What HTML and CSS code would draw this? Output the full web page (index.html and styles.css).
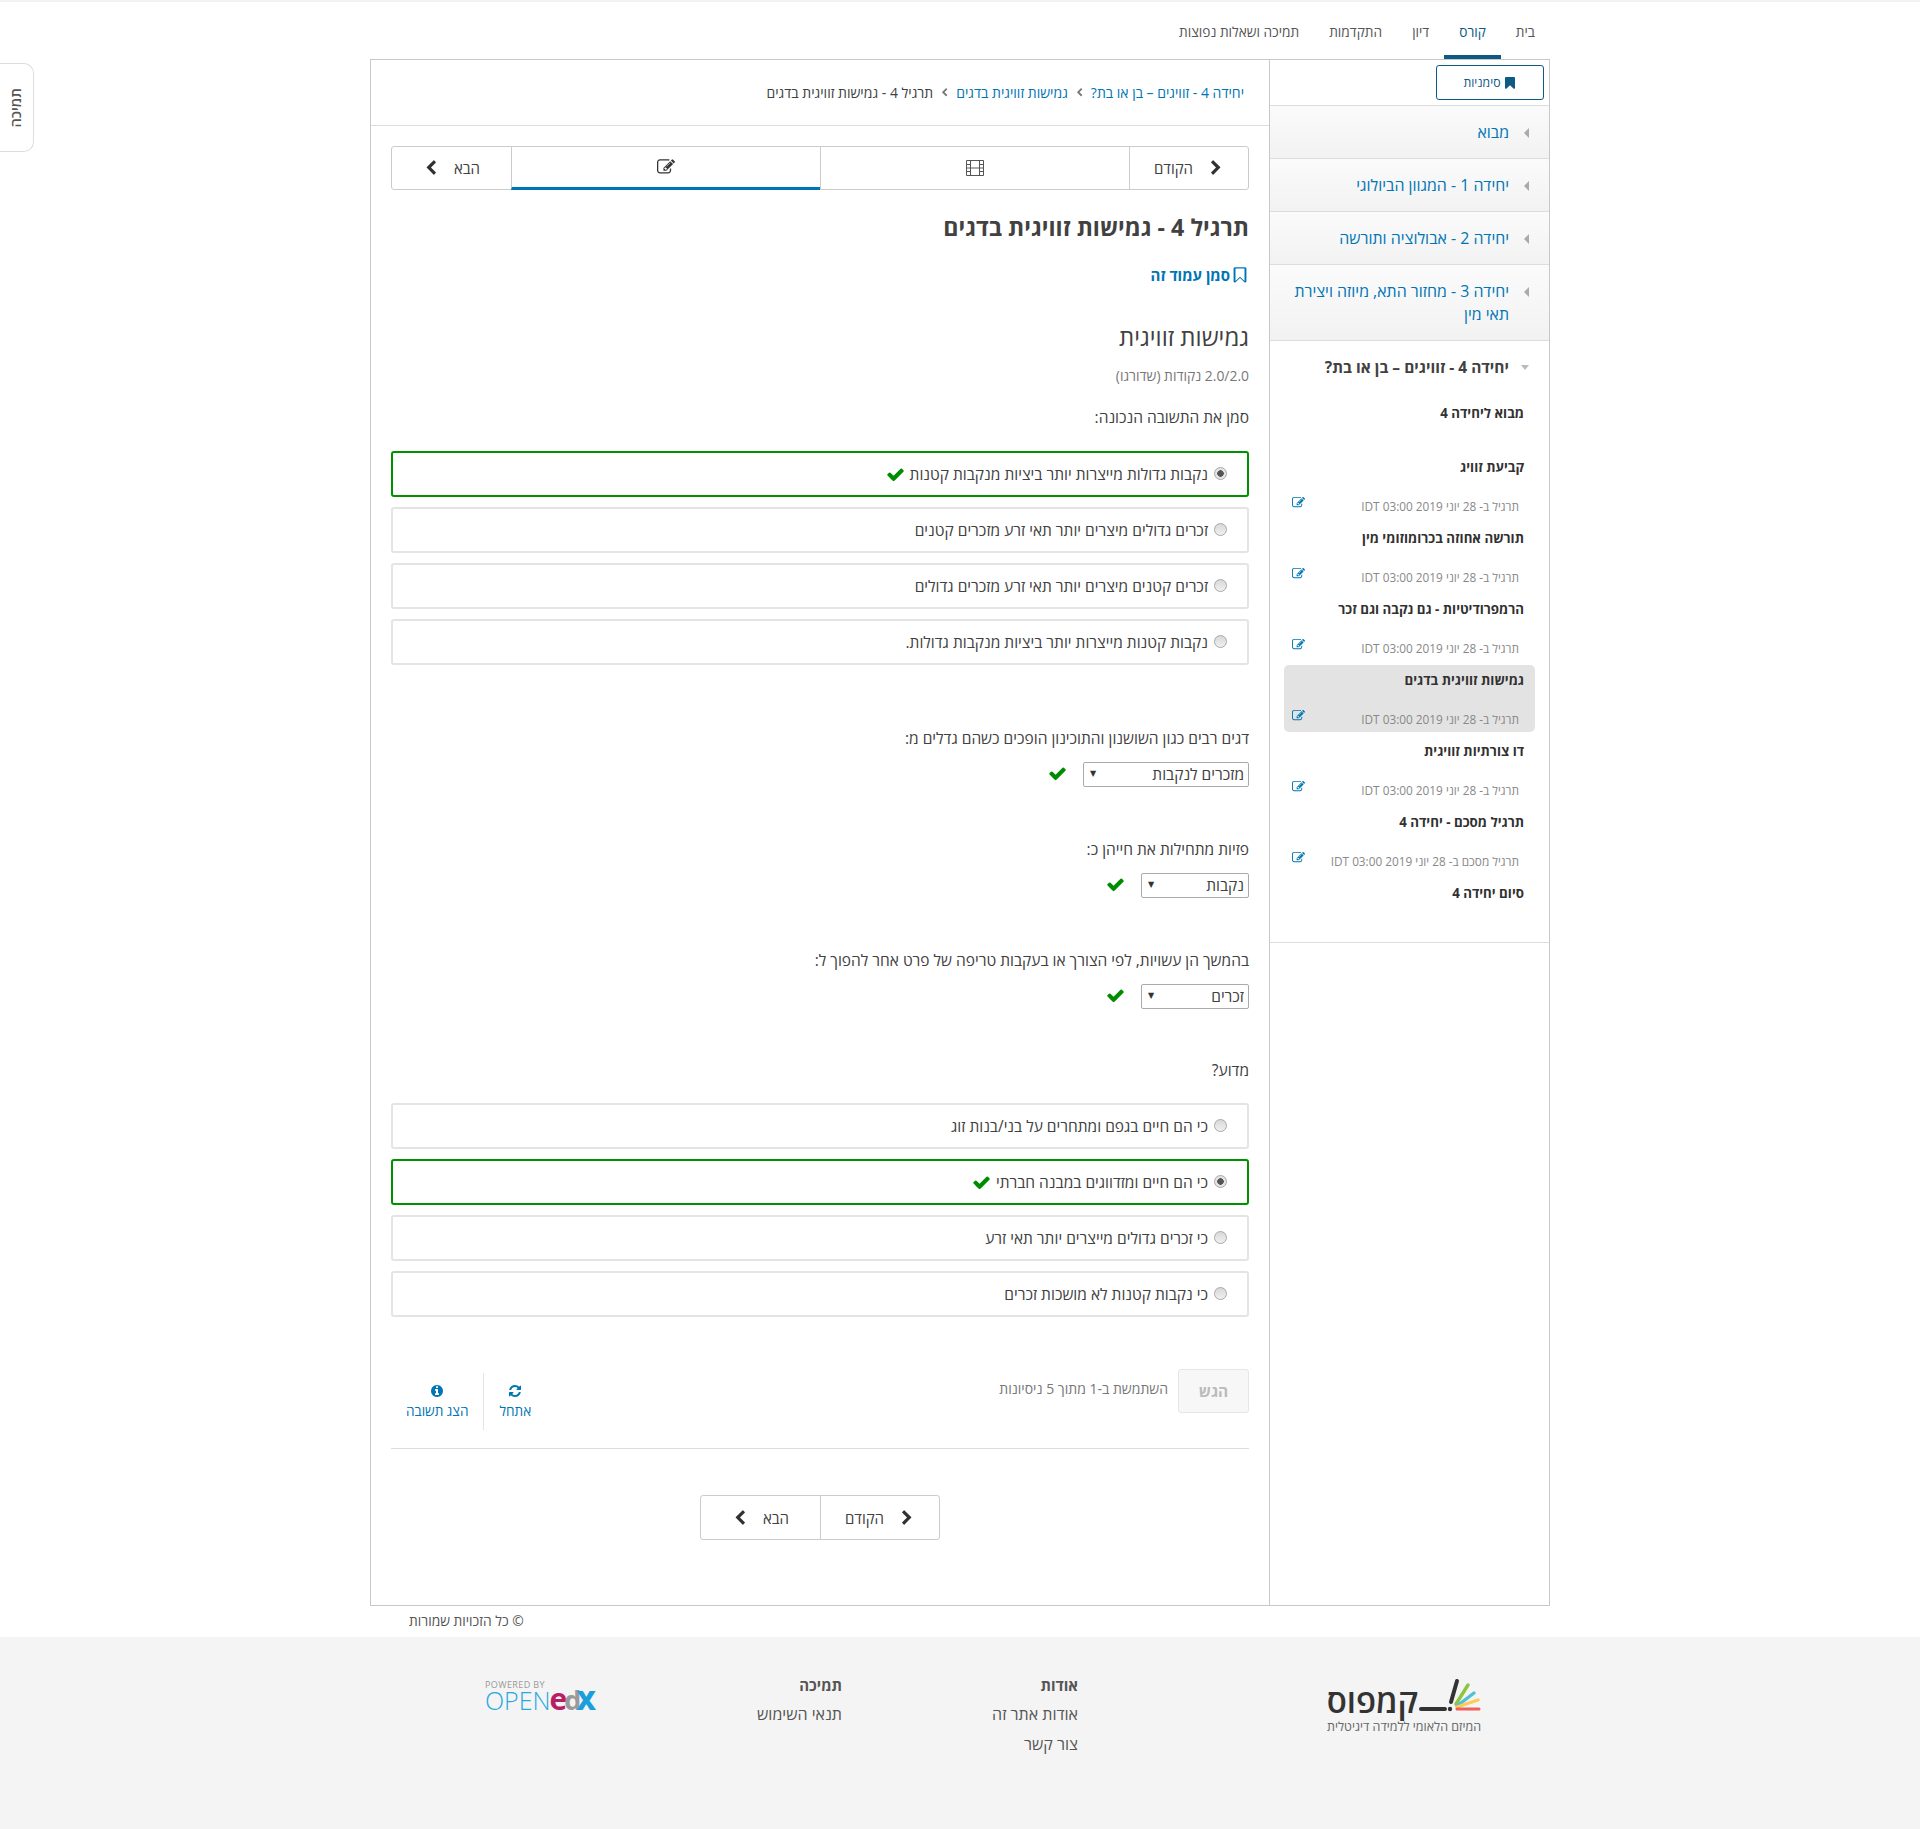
FILE: index.html
```html
<!DOCTYPE html>
<html lang="he" dir="rtl">
<head>
  <meta charset="UTF-8">
  <title>תרגיל 4 - גמישות זוויגית בדגים</title>
  <link rel="stylesheet" href="styles.css">
</head>
<body>
  <svg class="sprite" xmlns="http://www.w3.org/2000/svg">
    <symbol id="i-check" viewBox="0 0 1792 1792"><path d="M1671 566q0 40-28 68l-724 724-136 136q-28 28-68 28t-68-28l-136-136-362-362q-28-28-28-68t28-68l136-136q28-28 68-28t68 28l294 295 656-657q28-28 68-28t68 28l136 136q28 28 28 68z"/></symbol>
    <symbol id="i-left" viewBox="0 0 1792 1792"><path d="M1427 301l-531 531 531 531q19 19 19 45t-19 45l-166 166q-19 19-45 19t-45-19l-742-742q-19-19-19-45t19-45l742-742q19-19 45-19t45 19l166 166q19 19 19 45t-19 45z"/></symbol>
    <symbol id="i-right" viewBox="0 0 1792 1792"><path d="M1363 877l-742 742q-19 19-45 19t-45-19l-166-166q-19-19-19-45t19-45l531-531-531-531q-19-19-19-45t19-45l166-166q19-19 45-19t45 19l742 742q19 19 19 45t-19 45z"/></symbol>
    <symbol id="i-bookmark" viewBox="0 0 1792 1792"><path d="M1420 128q23 0 44 9 33 13 52.5 41t19.5 62v1289q0 34-19.5 62t-52.5 41q-19 8-44 8-48 0-83-32l-441-424-441 424q-36 33-83 33-23 0-44-9-33-13-52.5-41t-19.5-62v-1289q0-34 19.5-62t52.5-41q21-9 44-9h1048z"/></symbol>
    <symbol id="i-bookmark-o" viewBox="0 0 1792 1792"><path d="M1344 256h-896v1243l448-430 448 430v-1243zm76-128q23 0 44 9 33 13 52.5 41t19.5 62v1289q0 34-19.5 62t-52.5 41q-19 8-44 8-48 0-83-32l-441-424-441 424q-36 33-83 33-23 0-44-9-33-13-52.5-41t-19.5-62v-1289q0-34 19.5-62t52.5-41q21-9 44-9h1048z"/></symbol>
    <symbol id="i-info" viewBox="0 0 1792 1792"><path d="M1152 1376v-160q0-14-9-23t-23-9h-96v-512q0-14-9-23t-23-9h-320q-14 0-23 9t-9 23v160q0 14 9 23t23 9h96v320h-96q-14 0-23 9t-9 23v160q0 14 9 23t23 9h448q14 0 23-9t9-23zm-128-896v-160q0-14-9-23t-23-9h-192q-14 0-23 9t-9 23v160q0 14 9 23t23 9h192q14 0 23-9t9-23zm640 416q0 209-103 385.5t-279.5 279.5-385.5 103-385.5-103-279.5-279.5-103-385.5 103-385.5 279.5-279.5 385.5-103 385.5 103 279.5 279.5 103 385.5z"/></symbol>
    <symbol id="i-refresh" viewBox="0 0 1792 1792"><path d="M1639 1056q0 5-1 7-64 268-268 434.5t-478 166.5q-146 0-282.5-55t-243.5-157l-129 129q-19 19-45 19t-45-19-19-45v-448q0-26 19-45t45-19h448q26 0 45 19t19 45-19 45l-137 137q71 66 161 102t187 36q134 0 250-65t186-179q11-17 53-117 8-23 30-23h192q13 0 22.5 9.5t9.5 22.5zm25-800v448q0 26-19 45t-45 19h-448q-26 0-45-19t-19-45 19-45l138-138q-148-137-349-137-134 0-250 65t-186 179q-11 17-53 117-8 23-30 23h-199q-13 0-22.5-9.5t-9.5-22.5v-7q65-268 270-434.5t480-166.5q146 0 284 55.5t245 156.5l130-129q19-19 45-19t45 19 19 45z"/></symbol>
    <symbol id="i-edit" viewBox="0 0 1792 1792"><path d="M888 1184l116-116-152-152-116 116v56h96v96h56zm440-720q-16-16-33 1l-350 350q-17 17-1 33t33-1l350-350q17-17 1-33zm80 594v190q0 119-84.5 203.5t-203.5 84.5h-832q-119 0-203.5-84.5t-84.5-203.5v-832q0-119 84.5-203.5t203.5-84.5h832q63 0 117 25 15 7 18 23 3 17-9 29l-49 49q-14 14-32 8-23-6-45-6h-832q-66 0-113 47t-47 113v832q0 66 47 113t113 47h832q66 0 113-47t47-113v-126q0-13 9-22l64-64q15-15 35-7t20 29zm-96-738l288 288-672 672h-288v-288zm444 132l-92 92-288-288 92-92q28-28 68-28t68 28l152 152q28 28 28 68t-28 68z"/></symbol>
    <symbol id="i-film" viewBox="0 0 20 18"><path fill="none" stroke="currentColor" d="M1.5 1.5h17v15h-17zM5.5 1.5v15M14.5 1.5v15M1.5 5.5h4M1.5 9h4M1.5 12.5h4M14.5 5.5h4M14.5 9h4M14.5 12.5h4M5.5 9h9"/></symbol>
  </svg>

  <a class="support-tab" href="#"><span>תמיכה</span></a>

  <div class="top-strip"></div>
  <nav class="course-tabs">
    <a class="course-tab" href="#">בית</a>
    <a class="course-tab active" href="#">קורס</a>
    <a class="course-tab" href="#">דיון</a>
    <a class="course-tab" href="#">התקדמות</a>
    <a class="course-tab" href="#">תמיכה ושאלות נפוצות</a>
  </nav>

  <div class="course-wrapper">
    <aside class="sidebar">
      <div class="sidebar-head">
        <a class="bookmarks-btn" href="#"><svg class="icon"><use href="#i-bookmark"/></svg>סימניות</a>
      </div>

      <a class="chapter" href="#"><span class="caret-left"></span><span>מבוא</span></a>
      <a class="chapter" href="#"><span class="caret-left"></span><span>יחידה 1 - המגוון הביולוגי</span></a>
      <a class="chapter" href="#"><span class="caret-left"></span><span>יחידה 2 - אבולוציה ותורשה</span></a>
      <a class="chapter" href="#"><span class="caret-left"></span><span>יחידה 3 - מחזור התא, מיוזה ויצירת תאי מין</span></a>

      <div class="chapter-open">
        <div class="chapter-title"><span class="caret-down"></span><span>יחידה 4 - זוויגים – בן או בת?</span></div>
        <ul class="subsections">
          <li class="subsection plain"><div class="sub-name">מבוא ליחידה 4</div></li>
          <li class="subsection">
            <div class="sub-name">קביעת זוויג</div>
            <div class="sub-due"><span>תרגיל ב- 28 יוני 2019 03:00 IDT</span><svg class="icon sub-icon"><use href="#i-edit"/></svg></div>
          </li>
          <li class="subsection">
            <div class="sub-name">תורשה אחוזה בכרומוזומי מין</div>
            <div class="sub-due"><span>תרגיל ב- 28 יוני 2019 03:00 IDT</span><svg class="icon sub-icon"><use href="#i-edit"/></svg></div>
          </li>
          <li class="subsection">
            <div class="sub-name">הרמפרודיטיות - גם נקבה וגם זכר</div>
            <div class="sub-due"><span>תרגיל ב- 28 יוני 2019 03:00 IDT</span><svg class="icon sub-icon"><use href="#i-edit"/></svg></div>
          </li>
          <li class="subsection current">
            <div class="sub-name">גמישות זוויגית בדגים</div>
            <div class="sub-due"><span>תרגיל ב- 28 יוני 2019 03:00 IDT</span><svg class="icon sub-icon"><use href="#i-edit"/></svg></div>
          </li>
          <li class="subsection">
            <div class="sub-name">דו צורתיות זוויגית</div>
            <div class="sub-due"><span>תרגיל ב- 28 יוני 2019 03:00 IDT</span><svg class="icon sub-icon"><use href="#i-edit"/></svg></div>
          </li>
          <li class="subsection">
            <div class="sub-name">תרגיל מסכם - יחידה 4</div>
            <div class="sub-due"><span>תרגיל מסכם ב- 28 יוני 2019 03:00 IDT</span><svg class="icon sub-icon"><use href="#i-edit"/></svg></div>
          </li>
          <li class="subsection plain"><div class="sub-name">סיום יחידה 4</div></li>
        </ul>
      </div>
    </aside>

    <main class="course-main">
      <div class="breadcrumbs">
        <a href="#">יחידה 4 - זוויגים – בן או בת?</a>
        <svg class="icon crumb-sep"><use href="#i-left"/></svg>
        <a href="#">גמישות זוויגית בדגים</a>
        <svg class="icon crumb-sep"><use href="#i-left"/></svg>
        <span>תרגיל 4 - גמישות זוויגית בדגים</span>
      </div>

      <div class="content">
        <div class="seq-nav">
          <a class="seq-cell seq-btn" href="#"><svg class="icon chevron"><use href="#i-right"/></svg>הקודם</a>
          <a class="seq-cell seq-tab" href="#"><svg class="icon film-icon"><use href="#i-film"/></svg></a>
          <a class="seq-cell seq-tab active" href="#"><svg class="icon tab-edit"><use href="#i-edit"/></svg></a>
          <a class="seq-cell seq-btn" href="#">הבא<svg class="icon chevron"><use href="#i-left"/></svg></a>
        </div>

        <h2 class="unit-title">תרגיל 4 - גמישות זוויגית בדגים</h2>
        <a class="bookmark-link" href="#"><svg class="icon"><use href="#i-bookmark-o"/></svg>סמן עמוד זה</a>

        <h3 class="problem-title">גמישות זוויגית</h3>
        <div class="problem-score">2.0/2.0 נקודות (שדורגו)</div>

        <p class="question first">סמן את התשובה הנכונה:</p>
        <div class="options">
          <label class="option correct"><input type="radio" name="q1" checked disabled><span>נקבות גדולות מייצרות יותר ביציות מנקבות קטנות</span><svg class="icon check"><use href="#i-check"/></svg></label>
          <label class="option"><input type="radio" name="q1" disabled><span>זכרים גדולים מיצרים יותר תאי זרע מזכרים קטנים</span></label>
          <label class="option"><input type="radio" name="q1" disabled><span>זכרים קטנים מיצרים יותר תאי זרע מזכרים גדולים</span></label>
          <label class="option"><input type="radio" name="q1" disabled><span>נקבות קטנות מייצרות יותר ביציות מנקבות גדולות.</span></label>
        </div>

        <p class="question q-gap-first">דגים רבים כגון השושנון והתוכינון הופכים כשהם גדלים מ:</p>
        <div class="answer-row">
          <div class="fake-select wide"><span>מזכרים לנקבות</span><span class="select-arrow">▼</span></div>
          <svg class="icon check"><use href="#i-check"/></svg>
        </div>

        <p class="question q-gap">פזיות מתחילות את חייהן כ:</p>
        <div class="answer-row">
          <div class="fake-select"><span>נקבות</span><span class="select-arrow">▼</span></div>
          <svg class="icon check"><use href="#i-check"/></svg>
        </div>

        <p class="question q-gap">בהמשך הן עשויות, לפי הצורך או בעקבות טריפה של פרט אחר להפוך ל:</p>
        <div class="answer-row">
          <div class="fake-select"><span>זכרים</span><span class="select-arrow">▼</span></div>
          <svg class="icon check"><use href="#i-check"/></svg>
        </div>

        <p class="question q-gap-why">מדוע?</p>
        <div class="options options-why">
          <label class="option"><input type="radio" name="q5" disabled><span>כי הם חיים בגפם ומתחרים על בני/בנות זוג</span></label>
          <label class="option correct"><input type="radio" name="q5" checked disabled><span>כי הם חיים ומזדווגים במבנה חברתי</span><svg class="icon check"><use href="#i-check"/></svg></label>
          <label class="option"><input type="radio" name="q5" disabled><span>כי זכרים גדולים מייצרים יותר תאי זרע</span></label>
          <label class="option"><input type="radio" name="q5" disabled><span>כי נקבות קטנות לא מושכות זכרים</span></label>
        </div>

        <div class="problem-actions">
          <div class="submit-group">
            <button class="submit-btn" disabled>הגש</button>
            <span class="attempts">השתמשת ב-1 מתוך 5 ניסיונות</span>
          </div>
          <div class="action-group">
            <a class="action-link" href="#"><svg class="icon"><use href="#i-refresh"/></svg>אתחל</a>
            <a class="action-link" href="#"><svg class="icon"><use href="#i-info"/></svg>הצג תשובה</a>
          </div>
        </div>

        <div class="bottom-nav">
          <a class="seq-btn" href="#"><svg class="icon chevron"><use href="#i-right"/></svg>הקודם</a>
          <a class="seq-btn" href="#">הבא<svg class="icon chevron"><use href="#i-left"/></svg></a>
        </div>
      </div>
    </main>
  </div>

  <div class="copyright">© כל הזכויות שמורות</div>

  <footer class="site-footer">
    <div class="footer-inner">
      <svg class="campus-logo" viewBox="0 0 200 80" width="200" height="80">
        <text class="campus-word" x="118" y="52">קמפוס</text>
        <path d="M121 48h24" stroke="#333" stroke-width="4" stroke-linecap="round"/>
        <path d="M157 20l-6 21" stroke="#333" stroke-width="4" stroke-linecap="round"/>
        <circle cx="150" cy="48" r="2.2" fill="#333"/>
        <path d="M168 24l-12 19" stroke="#8cc63f" stroke-width="3.4" stroke-linecap="round"/>
        <path d="M174 32l-17 13" stroke="#4fc0d6" stroke-width="3.4" stroke-linecap="round"/>
        <path d="M178 39l-21 7" stroke="#fbcb5c" stroke-width="3.4" stroke-linecap="round"/>
        <path d="M179 48h-22" stroke="#f0605d" stroke-width="3" stroke-linecap="round"/>
        <text class="campus-tag" x="181" y="70">המיזם הלאומי ללמידה דיגיטלית</text>
      </svg>
      <div class="footer-col about-col">
        <h4>אודות</h4>
        <a href="#">אודות אתר זה</a>
        <a href="#">צור קשר</a>
      </div>
      <div class="footer-col support-col">
        <h4>תמיכה</h4>
        <a href="#">תנאי השימוש</a>
      </div>
      <svg class="edx-logo" viewBox="0 0 130 44" width="130" height="44">
        <text class="edx-powered" x="0" y="10">POWERED BY</text>
        <text class="edx-word" x="0" y="32"><tspan class="edx-open">OPEN</tspan><tspan class="edx-e" dx="-1">e</tspan><tspan class="edx-d" dx="-3">d</tspan><tspan class="edx-x" dx="-5">X</tspan></text>
      </svg>
    </div>
  </footer>
</body>
</html>
```

FILE: styles.css
```css
* {
  box-sizing: border-box;
}
body {
  margin: 0;
  font-family: "Open Sans", "Noto Sans", "DejaVu Sans", sans-serif;
  font-size: 15.5px;
  color: #414141;
  background: #fff;
}
a {
  text-decoration: none;
  color: #0075b4;
}
.sprite {
  display: none;
}
.icon {
  display: block;
  width: 14px;
  height: 14px;
  flex: none;
  fill: currentColor;
}

/* top */
.top-strip {
  height: 2px;
  background: #f2f2f2;
}
.support-tab {
  position: absolute;
  left: 0;
  top: 63px;
  width: 34px;
  height: 89px;
  padding-right: 2px;
  display: flex;
  align-items: center;
  justify-content: center;
  font-size: 14.5px;
  font-weight: 600;
  color: #555;
  background: #fff;
  border: 1px solid #ddd;
  border-left: none;
  border-radius: 0 10px 10px 0;
}
.support-tab span {
  writing-mode: vertical-rl;
  transform: rotate(180deg);
}
.course-tabs {
  width: 1180px;
  height: 57px;
  margin: 0 auto;
  display: flex;
}
.course-tab {
  padding: 0 15px;
  height: 57px;
  line-height: 60px;
  font-size: 13.7px;
  color: #555;
}
.course-tab.active {
  color: #0d5b85;
  border-bottom: 4px solid #0d5b85;
}

/* frame */
.course-wrapper {
  width: 1180px;
  margin: 0 auto;
  display: flex;
  border: 1px solid #c8c8c8;
}
.sidebar {
  width: 279px;
  flex: none;
}
.course-main {
  flex: 1;
  border-right: 1px solid #c8c8c8;
  padding-bottom: 65px;
}

/* sidebar */
.sidebar-head {
  height: 46px;
  padding: 5px 5px 0 0;
  border-bottom: 1px solid #ddd;
}
.bookmarks-btn {
  width: 108px;
  height: 35px;
  display: flex;
  align-items: center;
  justify-content: center;
  gap: 2px;
  font-size: 12.3px;
  color: #0d5b85;
  border: 1px solid #0d5b85;
  border-radius: 3px;
}
.bookmarks-btn .icon {
  width: 14px;
  height: 14px;
}
.chapter {
  display: flex;
  align-items: flex-start;
  padding: 15px 20px 14px 22px;
  font-size: 15.9px;
  line-height: 23px;
  background: linear-gradient(#fbfbfb, #f2f2f2);
  border-bottom: 1px solid #ddd;
}
.caret-left {
  flex: none;
  margin: 7px 0 0 15px;
  width: 0;
  height: 0;
  border-top: 5px solid transparent;
  border-bottom: 5px solid transparent;
  border-right: 5px solid #aaa;
}
.caret-down {
  flex: none;
  margin: 9px 0 0 12px;
  width: 0;
  height: 0;
  border-left: 4px solid transparent;
  border-right: 4px solid transparent;
  border-top: 5px solid #bbb;
}
.chapter-open {
  padding: 15px 0 10px;
  border-bottom: 1px solid #ddd;
}
.chapter-title {
  display: flex;
  padding: 0 20px 0 22px;
  font-size: 15.5px;
  font-weight: 700;
  line-height: 23px;
  color: #414141;
}
.subsections {
  list-style: none;
  margin: 19px 14px 0;
  padding: 0;
}
.subsection {
  height: 67px;
  margin-bottom: 4px;
  padding: 5px 11px 0 8px;
  border-radius: 5px;
}
.subsection.plain {
  height: 50px;
}
.subsection.current {
  background: #e3e3e3;
}
.sub-name {
  font-size: 13.3px;
  font-weight: 700;
  line-height: 20px;
  color: #313131;
}
.sub-due {
  display: flex;
  justify-content: space-between;
  margin-top: 19px;
  padding-right: 5px;
  font-size: 11.8px;
  line-height: 20px;
  color: #888;
}
.sub-icon {
  width: 13px;
  height: 13px;
  color: #0075b4;
}

/* main */
.breadcrumbs {
  height: 66px;
  display: flex;
  align-items: center;
  gap: 7px;
  padding-right: 25px;
  font-size: 14px;
  border-bottom: 1px solid #ddd;
}
.crumb-sep {
  width: 9px;
  height: 9px;
  color: #777;
}
.content {
  padding: 20px 20px 0;
}
.seq-nav {
  display: flex;
  height: 44px;
  border: 1px solid #ccc;
  border-radius: 3px;
}
.seq-cell {
  display: flex;
  align-items: center;
  justify-content: center;
  border-left: 1px solid #ccc;
}
.seq-cell:last-child {
  border-left: none;
}
.seq-btn {
  flex: none;
  width: 119px;
  gap: 15px;
  font-size: 15px;
  color: #414141;
  display: flex;
  align-items: center;
  justify-content: center;
}
.seq-tab {
  flex: 1;
  color: #555;
}
.seq-tab.active {
  color: #333;
  border-bottom: 3px solid #0075b4;
  margin-bottom: -1px;
}
.chevron {
  width: 16px;
  height: 16px;
  color: #313131;
}
.film-icon {
  width: 20px;
  height: 18px;
}
.tab-edit {
  width: 18px;
  height: 18px;
  margin-top: -1px;
}
.unit-title {
  margin: 22px 0 0;
  font-size: 23.2px;
  font-weight: 700;
  line-height: 30px;
  color: #414141;
}
.bookmark-link {
  margin-top: 23px;
  display: flex;
  align-items: center;
  gap: 1px;
  width: max-content;
  font-size: 15px;
  font-weight: 700;
  line-height: 20px;
}
.bookmark-link .icon {
  width: 18px;
  height: 18px;
}
.problem-title {
  margin: 37px 0 0;
  font-size: 24px;
  font-weight: 400;
  line-height: 30px;
  color: #414141;
}
.problem-score {
  margin-top: 14px;
  font-size: 13.9px;
  line-height: 20px;
  color: #777;
}
.question {
  margin: 0;
  font-size: 15.5px;
  line-height: 20px;
}
.question.first {
  margin-top: 21px;
}
.q-gap-first {
  margin-top: 63px;
}
.q-gap {
  margin-top: 52px;
}
.q-gap-why {
  margin-top: 51px;
}
.options {
  display: flex;
  flex-direction: column;
  gap: 10px;
  margin-top: 24px;
}
.options-why {
  margin-top: 23px;
}
.option {
  height: 46px;
  display: flex;
  align-items: center;
  padding: 0 20px 0 10px;
  font-size: 15.5px;
  border: 2px solid #e4e4e4;
  border-radius: 3px;
}
.option input {
  appearance: none;
  width: 13px;
  height: 13px;
  margin: -2px 0 0 6px;
  border: 1px solid #a8a8a8;
  border-radius: 50%;
  background: linear-gradient(#d8d8d8, #f0f0f0);
}
.option input:checked {
  background: radial-gradient(circle, #555 0 3px, #e4e4e4 3.5px);
}
.option.correct {
  border-color: #009100;
}
.check {
  width: 19px;
  height: 19px;
  color: #008c00;
}
.option .check {
  margin-right: 5px;
}
.answer-row {
  display: flex;
  align-items: center;
  gap: 16px;
  margin-top: 14px;
}
.answer-row .check {
  margin-top: -2px;
}
.fake-select {
  width: 108px;
  height: 25px;
  display: flex;
  align-items: center;
  justify-content: space-between;
  padding: 0 4px 2px 6px;
  font-size: 15.5px;
  color: #414141;
  background: #fff;
  border: 1px solid #aaa;
  border-radius: 2px;
}
.fake-select.wide {
  width: 166px;
}
.select-arrow {
  font-size: 8px;
  color: #333;
  margin-top: -2px;
}
.problem-actions {
  margin-top: 52px;
  padding-bottom: 18px;
  display: flex;
  justify-content: space-between;
  border-bottom: 1px solid #ddd;
}
.submit-group {
  display: flex;
  gap: 10px;
  align-items: flex-start;
}
.submit-btn {
  width: 71px;
  height: 44px;
  padding: 0;
  font-family: inherit;
  font-size: 15.5px;
  font-weight: 700;
  color: #bbb;
  background: #f7f7f7;
  border: 1px solid #e6e6e6;
  border-radius: 3px;
}
.attempts {
  margin-top: 10px;
  font-size: 14px;
  line-height: 20px;
  color: #777;
}
.action-group {
  display: flex;
  margin-top: 4px;
  height: 57px;
}
.action-link {
  display: flex;
  flex-direction: column;
  align-items: center;
  gap: 3px;
  padding: 11px 15px 0;
  font-size: 13.6px;
  line-height: 20px;
}
.action-link:first-child {
  border-left: 1px solid #e4e4e4;
}
.action-link .icon {
  width: 14px;
  height: 14px;
}
.bottom-nav {
  width: 240px;
  height: 45px;
  margin: 46px auto 0;
  display: flex;
  border: 1px solid #ccc;
  border-radius: 3px;
}
.bottom-nav .seq-btn:first-child {
  border-left: 1px solid #ccc;
}

/* footer */
.copyright {
  width: 1180px;
  height: 31px;
  margin: 0 auto;
  padding: 0 0 2px 39px;
  display: flex;
  justify-content: flex-end;
  align-items: center;
  font-size: 13.8px;
  color: #555;
}
.site-footer {
  height: 192px;
  background: #f4f4f4;
}
.footer-inner {
  width: 1180px;
  margin: 0 auto;
  padding-top: 24px;
  display: flex;
  align-items: flex-start;
}
.campus-logo {
  flex: none;
  margin-right: 50px;
}
.campus-word {
  direction: rtl;
  text-anchor: start;
  font-size: 33px;
  font-weight: 600;
  fill: #333;
}
.campus-tag {
  direction: rtl;
  text-anchor: start;
  font-size: 12.5px;
  fill: #666;
}
.footer-col {
  flex: none;
  display: flex;
  flex-direction: column;
}
.footer-col h4 {
  margin: 14px 0 0;
  font-size: 15px;
  line-height: 20px;
  font-weight: 700;
  color: #555;
}
.footer-col a {
  margin-top: 9px;
  font-size: 16px;
  line-height: 21px;
  color: #555;
}
.about-col {
  width: 236px;
  margin-right: 222px;
}
.support-col {
  width: 227px;
}
.edx-logo {
  flex: none;
  margin-top: 17px;
}
.edx-logo text {
  direction: ltr;
  text-anchor: start;
}
.edx-powered {
  font-size: 9px;
  fill: #999;
  letter-spacing: 0.4px;
}
.edx-word {
  font-size: 25px;
}
.edx-open {
  font-weight: 300;
  fill: #29a8e0;
}
.edx-e {
  font-size: 30px;
  font-weight: 700;
  fill: #b81e63;
}
.edx-d {
  font-size: 27px;
  font-weight: 700;
  fill: #9a9a9a;
}
.edx-x {
  font-size: 27px;
  font-weight: 800;
  fill: #1b9fdc;
}
```
